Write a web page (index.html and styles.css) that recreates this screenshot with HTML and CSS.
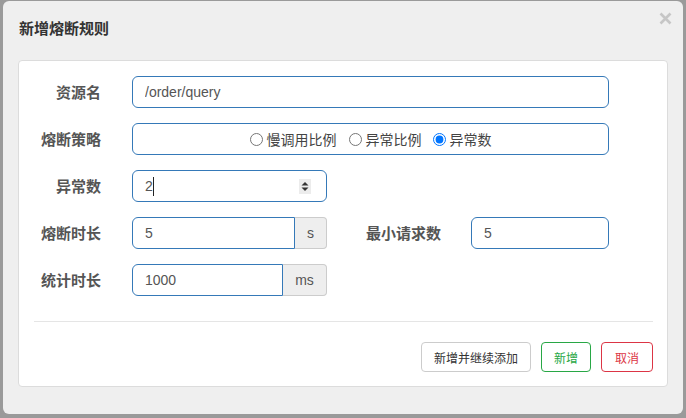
FILE: index.html
```html
<!DOCTYPE html>
<html lang="zh-CN">
<head>
<meta charset="utf-8">
<title>新增熔断规则</title>
<link rel="stylesheet" href="styles.css">
</head>
<body>
<div class="dialog">
  <div class="dialog-header">
    <h3 class="dialog-title">新增熔断规则</h3>
    <span class="close" aria-label="关闭">
      <svg width="13" height="13" viewBox="0 0 13 13"><path d="M1.5 1.5 L11.5 11.5 M11.5 1.5 L1.5 11.5" stroke="#c6c6c6" stroke-width="2.6" stroke-linecap="butt"/></svg>
    </span>
  </div>
  <div class="card">
    <div class="row">
      <label class="label">资源名</label>
      <input class="input wide" type="text" value="/order/query">
    </div>
    <div class="row">
      <label class="label">熔断策略</label>
      <div class="radio-box wide">
        <label class="radio"><input type="radio" name="grade"><span>慢调用比例</span></label>
        <label class="radio"><input type="radio" name="grade"><span>异常比例</span></label>
        <label class="radio"><input type="radio" name="grade" checked><span>异常数</span></label>
      </div>
    </div>
    <div class="row">
      <label class="label">异常数</label>
      <div class="num-field">
        <span class="num-value">2</span><span class="caret"></span>
        <span class="spacer"></span>
        <svg class="spin" width="12" height="15" viewBox="0 0 12 15"><rect width="12" height="15" fill="#ececec"/><path d="M2.5 6.5 L6 3 L9.5 6.5 Z" fill="#333"/><path d="M2.5 8.5 L6 12 L9.5 8.5 Z" fill="#333"/></svg>
      </div>
    </div>
    <div class="row">
      <label class="label">熔断时长</label>
      <div class="group">
        <input class="input grouped" type="text" value="5">
        <span class="addon addon-s">s</span>
      </div>
      <label class="label-2">最小请求数</label>
      <input class="input min-req" type="text" value="5">
    </div>
    <div class="row last">
      <label class="label">统计时长</label>
      <div class="group">
        <input class="input grouped" type="text" value="1000">
        <span class="addon addon-ms">ms</span>
      </div>
    </div>
    <div class="divider"></div>
    <div class="actions">
      <button class="btn btn-default">新增并继续添加</button>
      <button class="btn btn-green">新增</button>
      <button class="btn btn-red">取消</button>
    </div>
  </div>
</div>
</body>
</html>
```
FILE: styles.css
```css
* { box-sizing: border-box; }
html, body { margin: 0; padding: 0; }
body {
  width: 686px;
  height: 418px;
  background: #9a9a9a;
  font-family: "Liberation Sans", "Noto Sans CJK SC", sans-serif;
  overflow: hidden;
  padding-top: 1px;
  padding-left: 3px;
}
.dialog {
  width: 680px;
  height: 413px;
  background: #efefef;
  border-radius: 6px;
}
.dialog-header {
  height: 59px;
  padding: 17px 11px 0 16px;
  display: flex;
  justify-content: space-between;
  align-items: flex-start;
}
.dialog-title {
  margin: 0;
  font-size: 15px;
  line-height: 20px;
  font-weight: bold;
  color: #333;
  font-family: "Noto Sans CJK SC", sans-serif;
}
.close {
  display: block;
  width: 13px;
  height: 13px;
  margin-top: -6px;
}
.close svg { display: block; }
.card {
  margin: 0 15px;
  height: 327px;
  background: #fff;
  border: 1px solid #dcdcdc;
  border-radius: 4px;
  padding: 15px 14px 14px 15px;
}
.row {
  display: flex;
  align-items: center;
  height: 32px;
  margin-bottom: 15px;
}
.row.last { margin-bottom: 0; }
.label {
  width: 67px;
  margin-right: 31px;
  text-align: right;
  font-size: 15px;
  font-weight: bold;
  color: #555;
  font-family: "Noto Sans CJK SC", sans-serif;
  line-height: 20px;
}
.label-2 {
  width: 76px;
  margin-left: 39px;
  margin-right: 29px;
  font-size: 15px;
  font-weight: bold;
  color: #555;
  font-family: "Noto Sans CJK SC", sans-serif;
  line-height: 20px;
}
.input {
  height: 32px;
  border: 1px solid #3579b8;
  border-radius: 6px;
  padding: 0 12px;
  font-family: "Liberation Sans", "Noto Sans CJK SC", sans-serif;
  font-size: 14px;
  color: #555;
  background: #fff;
  outline: none;
}
.wide { width: 477px; }
.radio-box {
  height: 32px;
  border: 1px solid #3579b8;
  border-radius: 6px;
  display: flex;
  justify-content: center;
  align-items: center;
}
.radio {
  display: flex;
  align-items: center;
  margin-right: 12px;
  font-size: 14px;
  color: #444;
  font-family: "Noto Sans CJK SC", sans-serif;
  line-height: 20px;
}
.radio:last-child { margin-right: 0; }
.radio:nth-child(2) { margin-right: 11px; }
.radio input {
  margin: 0 4px 0 0;
  width: 13px;
  height: 13px;
}
.num-field {
  width: 195px;
  height: 32px;
  border: 1px solid #3579b8;
  border-radius: 6px;
  padding: 0 15px 0 12px;
  display: flex;
  align-items: center;
  font-size: 14px;
  color: #555;
}
.num-value { line-height: 20px; }
.caret {
  width: 1px;
  height: 19px;
  background: #222;
}
.spacer { flex: 1; }
.spin { display: block; }
.group {
  display: flex;
  width: 195px;
  height: 32px;
}
.grouped {
  flex: 1;
  min-width: 0;
  border-radius: 6px 0 0 6px;
}
.addon {
  display: flex;
  align-items: center;
  justify-content: center;
  height: 32px;
  background: #eee;
  border: 1px solid #ccc;
  border-left: none;
  border-radius: 0 4px 4px 0;
  font-size: 14px;
  color: #555;
}
.addon-s { width: 32px; }
.addon-ms { width: 44px; }
.min-req { width: 138px; }
.divider {
  height: 1px;
  background: #e5e5e5;
  margin-top: 25px;
}
.actions {
  margin-top: 20px;
  display: flex;
  justify-content: flex-end;
  gap: 10px;
}
.btn {
  height: 30px;
  padding: 0 12px;
  border-radius: 4px;
  background: #fff;
  font-size: 12px;
  font-family: "Noto Sans CJK SC", sans-serif;
  border: 1px solid #ccc;
  color: #333;
}
.btn-green { border-color: #28a745; color: #28a745; }
.btn-red { border-color: #dc3545; color: #dc3545; padding: 0 13px; }
```
